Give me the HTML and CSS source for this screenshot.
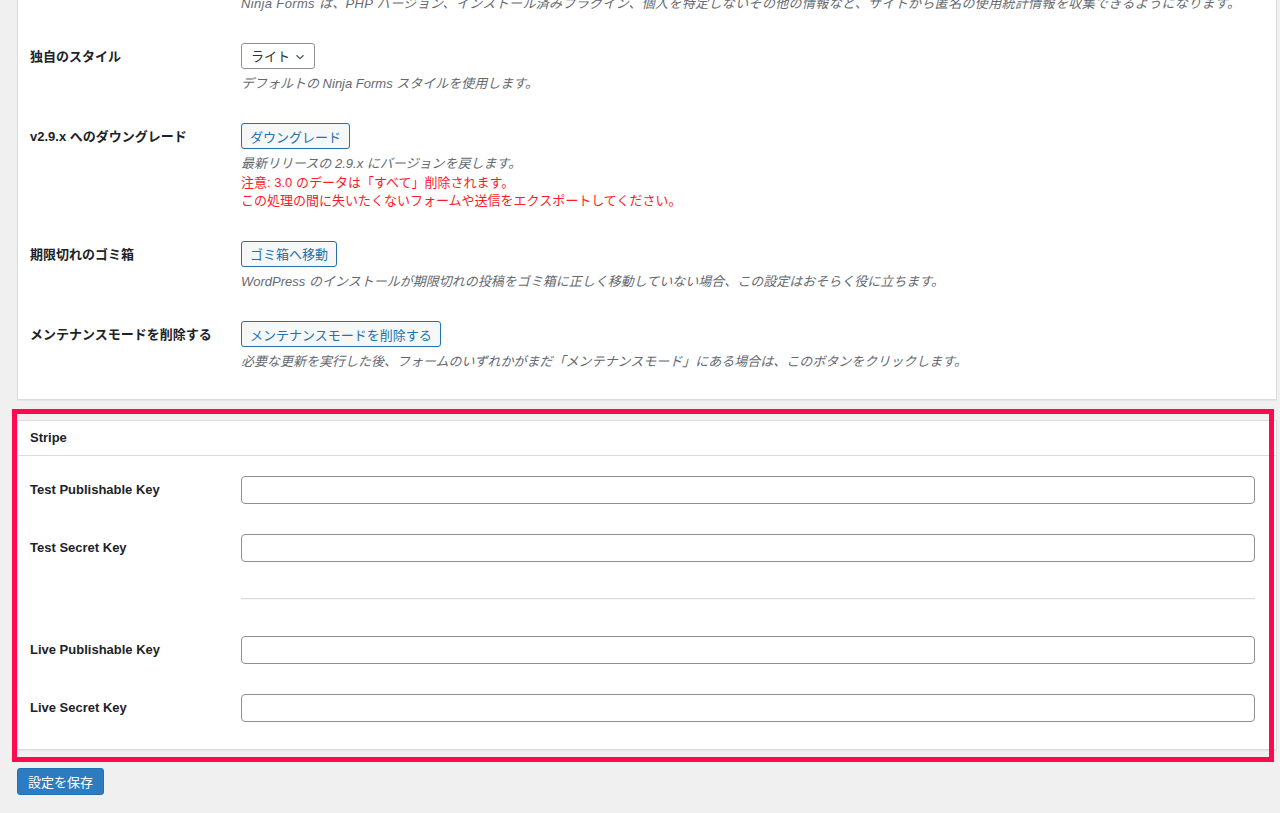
FILE: index.html
```html
<!DOCTYPE html>
<html lang="ja">
<head>
<meta charset="utf-8">
<title>Ninja Forms 設定</title>
<link rel="stylesheet" href="styles.css">
</head>
<body>
<div class="wrap">
  <div class="postbox postbox-top">
    <div class="inside">
      <div class="row row-partial">
        <div class="th"></div>
        <div class="td">
          <p class="desc">Ninja Forms は、PHP バージョン、インストール済みプラグイン、個人を特定しないその他の情報など、サイトから匿名の使用統計情報を収集できるようになります。</p>
        </div>
      </div>
      <div class="row">
        <div class="th">独自のスタイル</div>
        <div class="td">
          <div class="select">ライト<svg class="chev" width="10" height="10" viewBox="0 0 10 10"><path d="M1.5 3.2 L5 6.7 L8.5 3.2" fill="none" stroke="#50575e" stroke-width="1.3"/></svg></div>
          <p class="desc">デフォルトの Ninja Forms スタイルを使用します。</p>
        </div>
      </div>
      <div class="row">
        <div class="th">v2.9.x へのダウングレード</div>
        <div class="td">
          <button class="btn">ダウングレード</button>
          <p class="desc">最新リリースの 2.9.x にバージョンを戻します。</p>
          <p class="note">注意: 3.0 のデータは「すべて」削除されます。</p>
          <p class="note">この処理の間に失いたくないフォームや送信をエクスポートしてください。</p>
        </div>
      </div>
      <div class="row">
        <div class="th">期限切れのゴミ箱</div>
        <div class="td">
          <button class="btn">ゴミ箱へ移動</button>
          <p class="desc">WordPress のインストールが期限切れの投稿をゴミ箱に正しく移動していない場合、この設定はおそらく役に立ちます。</p>
        </div>
      </div>
      <div class="row">
        <div class="th">メンテナンスモードを削除する</div>
        <div class="td">
          <button class="btn">メンテナンスモードを削除する</button>
          <p class="desc">必要な更新を実行した後、フォームのいずれかがまだ「メンテナンスモード」にある場合は、このボタンをクリックします。</p>
        </div>
      </div>
    </div>
  </div>

  <div class="postbox postbox-stripe">
    <h2 class="hndle">Stripe</h2>
    <div class="inside">
      <div class="table">
        <div class="row row-input">
          <div class="th">Test Publishable Key</div>
          <div class="td"><input class="text" type="text"></div>
        </div>
        <div class="row row-input">
          <div class="th">Test Secret Key</div>
          <div class="td"><input class="text" type="text"></div>
        </div>
        <div class="row row-sep">
          <div class="th"></div>
          <div class="td"><div class="sep"></div></div>
        </div>
        <div class="row row-input">
          <div class="th">Live Publishable Key</div>
          <div class="td"><input class="text" type="text"></div>
        </div>
        <div class="row row-input">
          <div class="th">Live Secret Key</div>
          <div class="td"><input class="text" type="text"></div>
        </div>
      </div>
    </div>
  </div>

  <button class="btn-primary">設定を保存</button>
</div>
<div class="highlight"></div>
</body>
</html>
```

FILE: styles.css
```css
* { box-sizing: border-box; }

html, body {
  margin: 0;
  padding: 0;
  background: #f0f0f1;
  overflow: hidden;
}

body {
  font-family: "Liberation Sans", "Noto Sans CJK JP", sans-serif;
  font-size: 13px;
  color: #1d2327;
  position: relative;
  height: 813px;
}

.wrap {
  padding: 0 3px 0 17px;
}

.postbox {
  background: #fff;
  border: 1px solid #dcdcde;
  box-shadow: 0 1px 1px rgba(0, 0, 0, 0.04);
}

.postbox-top {
  margin-top: -60px;
}

.postbox-top .inside {
  padding: 0 12px 12px;
}

.row {
  display: grid;
  grid-template-columns: 211px 1fr;
}

.th {
  padding-top: 20px;
  font-weight: 700;
  line-height: 17px;
  color: #1d2327;
}

.td {
  padding: 15px 9px 15px 0;
}

.row-partial .td {
  padding-top: 54px;
  padding-bottom: 14px;
}

.row-partial .desc {
  margin-top: 0;
  letter-spacing: 0.35px;
}

.desc {
  margin: 6px 0 0;
  font-style: italic;
  color: #646970;
  line-height: 18.5px;
  white-space: nowrap;
}

.note {
  margin: 0;
  color: #ff1a2a;
  line-height: 18.5px;
  white-space: nowrap;
}

.select {
  display: inline-flex;
  align-items: center;
  height: 26px;
  width: 74px;
  padding: 0 0 0 9px;
  border: 1px solid #8c8f94;
  border-radius: 3px;
  color: #2c3338;
  background: #fff;
  position: relative;
}

.select .chev {
  position: absolute;
  right: 9px;
  top: 8px;
}

.btn {
  display: inline-flex;
  align-items: center;
  height: 26px;
  padding: 0 8px;
  margin: 0;
  font: inherit;
  color: #2271b1;
  background: #f6f7f7;
  border: 1px solid #2271b1;
  border-radius: 3px;
  vertical-align: top;
}

.postbox-stripe {
  margin-top: 20px;
}

.hndle {
  margin: 0;
  height: 35px;
  padding: 0 12px;
  display: flex;
  align-items: center;
  font-size: 13px;
  font-weight: 700;
  border-bottom: 1px solid #dcdcde;
  color: #1d2327;
}

.postbox-stripe .inside {
  padding: 5px 12px 12px;
}

.text {
  display: block;
  width: 100%;
  height: 28px;
  margin: 0;
  border: 1px solid #8c8f94;
  border-radius: 4px;
  background: #fff;
  font: inherit;
  padding: 0 8px;
}

.row-sep .th {
  padding-top: 0;
}

.row-sep .td {
  padding: 21px 9px 21px 0;
}

.sep {
  height: 1px;
  background: #dcdcde;
  border-bottom: 1px solid #f6f7f7;
  box-sizing: content-box;
}

.btn-primary {
  display: inline-flex;
  align-items: center;
  margin-top: 18px;
  height: 27px;
  padding: 0 10px;
  font: inherit;
  color: #fff;
  background: #2c7cbf;
  border: 1px solid #2271b1;
  border-radius: 3px;
}

.highlight {
  position: absolute;
  left: 12px;
  top: 409px;
  width: 1262px;
  height: 353px;
  border: 5px solid #ff0a50;
  pointer-events: none;
}
```
